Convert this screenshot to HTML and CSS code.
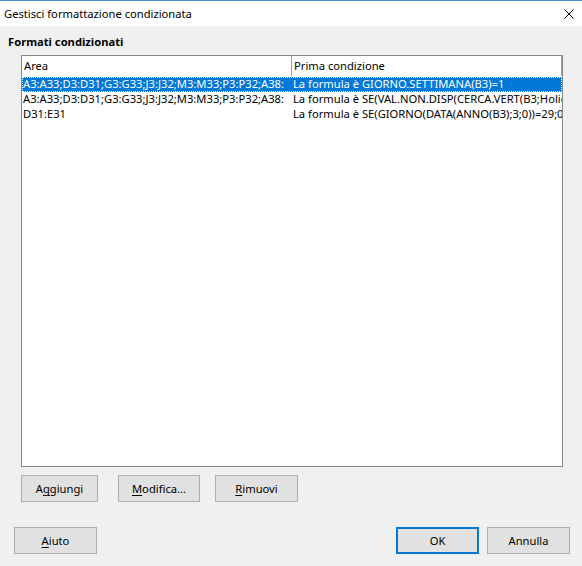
FILE: index.html
```html
<!DOCTYPE html>
<html lang="it">
<head>
<meta charset="utf-8">
<title>Gestisci formattazione condizionata</title>
<link rel="stylesheet" href="styles.css">
</head>
<body>
<div class="window">
  <div class="titlebar">
    <span class="title">Gestisci formattazione condizionata</span>
    <svg class="close" width="10" height="10" viewBox="0 0 10 10"><path d="M0.5 0.5 L9.5 9.5 M9.5 0.5 L0.5 9.5" stroke="#000" stroke-width="1" fill="none"/></svg>
  </div>
  <div class="content">
    <div class="section-label">Formati condizionati</div>
    <div class="list">
      <div class="list-header">
        <div class="col col-area">Area</div>
        <div class="col col-cond">Prima condizione</div>
      </div>
      <div class="row selected">
        <div class="cell col-area">A3:A33;D3:D31;G3:G33;J3:J32;M3:M33;P3:P32;A38:A38</div>
        <div class="cell col-cond">La formula è GIORNO.SETTIMANA(B3)=1</div>
      </div>
      <div class="row">
        <div class="cell col-area">A3:A33;D3:D31;G3:G33;J3:J32;M3:M33;P3:P32;A38:A38</div>
        <div class="cell col-cond">La formula è SE(VAL.NON.DISP(CERCA.VERT(B3;Holidays;1;0));0;1)</div>
      </div>
      <div class="row">
        <div class="cell col-area">D31:E31</div>
        <div class="cell col-cond">La formula è SE(GIORNO(DATA(ANNO(B3);3;0))=29;0;1)</div>
      </div>
    </div>
    <div class="list-buttons">
      <button class="btn btn-aggiungi">A<u>g</u>giungi</button>
      <button class="btn btn-modifica"><u>M</u>odifica...</button>
      <button class="btn btn-rimuovi"><u>R</u>imuovi</button>
    </div>
  </div>
  <div class="footer">
    <button class="btn"><u>A</u>iuto</button>
    <div class="footer-right">
      <button class="btn btn-default">OK</button>
      <button class="btn btn-annulla">Annulla</button>
    </div>
  </div>
</div>
</body>
</html>
```

FILE: styles.css
```css
* { box-sizing: border-box; }
html, body {
  margin: 0;
  padding: 0;
  width: 582px;
  height: 566px;
  overflow: hidden;
  background: #f0f0f0;
  font-family: "Noto Sans", "DejaVu Sans", sans-serif;
  font-size: 11.2px;
  color: #000;
}
.window {
  width: 582px;
  height: 566px;
  border-top: 1px solid #4a8fc4;
  display: flex;
  flex-direction: column;
}
.titlebar {
  height: 25px;
  background: #fff;
  display: flex;
  align-items: center;
  justify-content: space-between;
  padding: 0 8px 0 4px;
  flex: none;
}
.title { line-height: 16px; }
.close { display: block; margin-top: 1px; }
.content {
  padding: 8px 19px 0 8px;
  display: flex;
  flex-direction: column;
}
.section-label {
  font-weight: bold;
  line-height: 16px;
  height: 21px;
}
.list {
  margin-left: 13px;
  width: 542px;
  height: 412px;
  background: #fff;
  border: 1px solid #828790;
  overflow: hidden;
}
.list-header {
  display: flex;
  height: 21px;
  border-bottom: 1px solid #fff;
}
.col {
  line-height: 20px;
  padding-left: 2px;
  white-space: nowrap;
  overflow: hidden;
}
.list-header .col-area {
  width: 270px;
  border-right: 1px solid #a0a0a0;
  flex: none;
}
.list-header .col-cond { flex: 1; border-right: 1px solid #a0a0a0; }
.row {
  display: flex;
  height: 15px;
  line-height: 14px;
}
.cell {
  white-space: nowrap;
  overflow: hidden;
  padding-left: 1px;
}
.row .col-area { width: 262px; margin-right: 8px; flex: none; }
.row .col-cond { flex: 1; padding-left: 1px; }
.row.selected {
  background: #0078d7;
  color: #fff;
  outline: 1px dotted #fff;
  outline-offset: -1px;
}
.list-buttons {
  display: flex;
  margin: 8px 0 0 13px;
  gap: 20px;
}
.btn {
  font: inherit;
  color: #000;
  background: #e1e1e1;
  border: 1px solid #adadad;
  height: 27px;
  padding: 0;
  margin: 0;
}
.btn u { text-decoration-thickness: 1px; text-underline-offset: 2px; }
.btn-aggiungi { width: 77px; }
.btn-modifica { width: 82px; }
.btn-rimuovi { width: 83px; margin-left: -5px; }
.footer {
  margin-top: auto;
  display: flex;
  justify-content: space-between;
  padding: 0 12px 12px 14px;
}
.footer .btn { width: 83px; }
.footer-right { display: flex; gap: 8px; }
.btn-default { border: 2px solid #0078d7; }
```
